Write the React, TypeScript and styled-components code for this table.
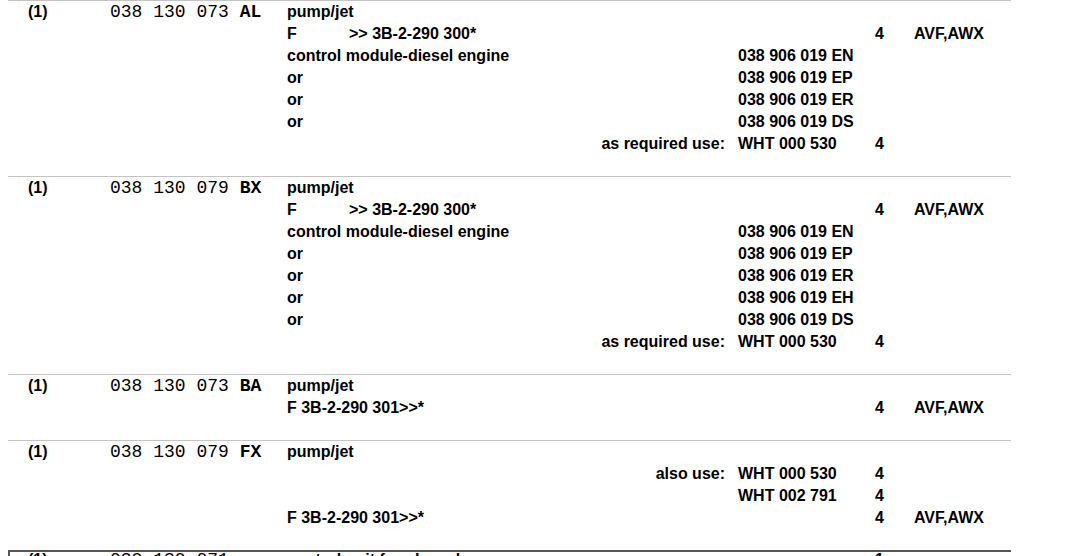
import React from "react";
import styled, { createGlobalStyle } from "styled-components";

const Global = createGlobalStyle`
  html, body { overflow: hidden; }
  body {
    margin: 0 0 0 8px;
    background: #ffffff;
    color: #000000;
    font-family: "Liberation Sans", Arial, sans-serif;
  }
`;

const List = styled.div`
  width: 1003px;
  display: flex;
  flex-direction: column;
`;

const Entry = styled.div<{ $selected?: boolean }>`
  display: grid;
  grid-template-columns: 82px 177px 1fr;
  padding: 0 0 21px 20px;
  border-top: ${(p) => (p.$selected ? "2px solid #555555" : "1px solid #c4c4c4")};
  border-left: ${(p) => (p.$selected ? "2px solid #555555" : "none")};
  font-size: 16px;
  font-weight: bold;
  line-height: ${(p) => (p.$selected ? "16px" : "22px")};
  ${(p) => (p.$selected ? "padding-left: 18px;" : "")}
`;

const Index = styled.div`
  white-space: nowrap;
`;

const PartNo = styled.div`
  font-family: "Liberation Mono", "Courier New", monospace;
  font-size: 18px;
  font-weight: normal;
  white-space: pre;
  letter-spacing: 0;
`;

const Suffix = styled.b`
  font-weight: bold;
`;

const Lines = styled.div`
  display: flex;
  flex-direction: column;
`;

const Line = styled.div`
  display: grid;
  grid-template-columns: 438px 124px 26px 1fr;
  column-gap: 13px;
  white-space: nowrap;
`;

const Desc = styled.div<{ $right?: boolean }>`
  text-align: ${(p) => (p.$right ? "right" : "left")};
  font-weight: ${(p) => (p.$right ? "normal" : "bold")};
  ${(p) => (p.$right ? "font-weight: bold;" : "")}
`;

const Flag = styled.span`
  display: inline-block;
  width: 62px;
`;

const Cell = styled.div``;

type L = { desc?: React.ReactNode; label?: string; part?: string; qty?: string; model?: string };

type E = { idx: string; num: string; suf: string; lines: L[]; selected?: boolean };

const entries: E[] = [
  {
    idx: "(1)",
    num: "038 130 073 ",
    suf: "AL",
    lines: [
      { desc: "pump/jet" },
      { desc: <><Flag>F</Flag>&gt;&gt; 3B-2-290 300*</>, qty: "4", model: "AVF,AWX" },
      { desc: "control module-diesel engine", part: "038 906 019 EN" },
      { desc: "or", part: "038 906 019 EP" },
      { desc: "or", part: "038 906 019 ER" },
      { desc: "or", part: "038 906 019 DS" },
      { label: "as required use:", part: "WHT 000 530", qty: "4" },
    ],
  },
  {
    idx: "(1)",
    num: "038 130 079 ",
    suf: "BX",
    lines: [
      { desc: "pump/jet" },
      { desc: <><Flag>F</Flag>&gt;&gt; 3B-2-290 300*</>, qty: "4", model: "AVF,AWX" },
      { desc: "control module-diesel engine", part: "038 906 019 EN" },
      { desc: "or", part: "038 906 019 EP" },
      { desc: "or", part: "038 906 019 ER" },
      { desc: "or", part: "038 906 019 EH" },
      { desc: "or", part: "038 906 019 DS" },
      { label: "as required use:", part: "WHT 000 530", qty: "4" },
    ],
  },
  {
    idx: "(1)",
    num: "038 130 073 ",
    suf: "BA",
    lines: [
      { desc: "pump/jet" },
      { desc: "F 3B-2-290 301>>*", qty: "4", model: "AVF,AWX" },
    ],
  },
  {
    idx: "(1)",
    num: "038 130 079 ",
    suf: "FX",
    lines: [
      { desc: "pump/jet" },
      { label: "also use:", part: "WHT 000 530", qty: "4" },
      { part: "WHT 002 791", qty: "4" },
      { desc: "F 3B-2-290 301>>*", qty: "4", model: "AVF,AWX" },
    ],
  },
  {
    idx: "(1)",
    num: "038 130 071 ",
    suf: "",
    selected: true,
    lines: [{ desc: "control unit for glow plugs", qty: "1" }],
  },
];

export default function App() {
  return (
    <>
      <Global />
      <List>
        {entries.map((e, i) => (
          <Entry key={i} $selected={e.selected}>
            <Index>{e.idx}</Index>
            <PartNo>
              {e.num}
              <Suffix>{e.suf}</Suffix>
            </PartNo>
            <Lines>
              {e.lines.map((l, j) => (
                <Line key={j}>
                  <Desc $right={!!l.label}>{l.label ?? l.desc ?? ""}</Desc>
                  <Cell>{l.part ?? ""}</Cell>
                  <Cell>{l.qty ?? ""}</Cell>
                  <Cell>{l.model ?? ""}</Cell>
                </Line>
              ))}
            </Lines>
          </Entry>
        ))}
      </List>
    </>
  );
}
